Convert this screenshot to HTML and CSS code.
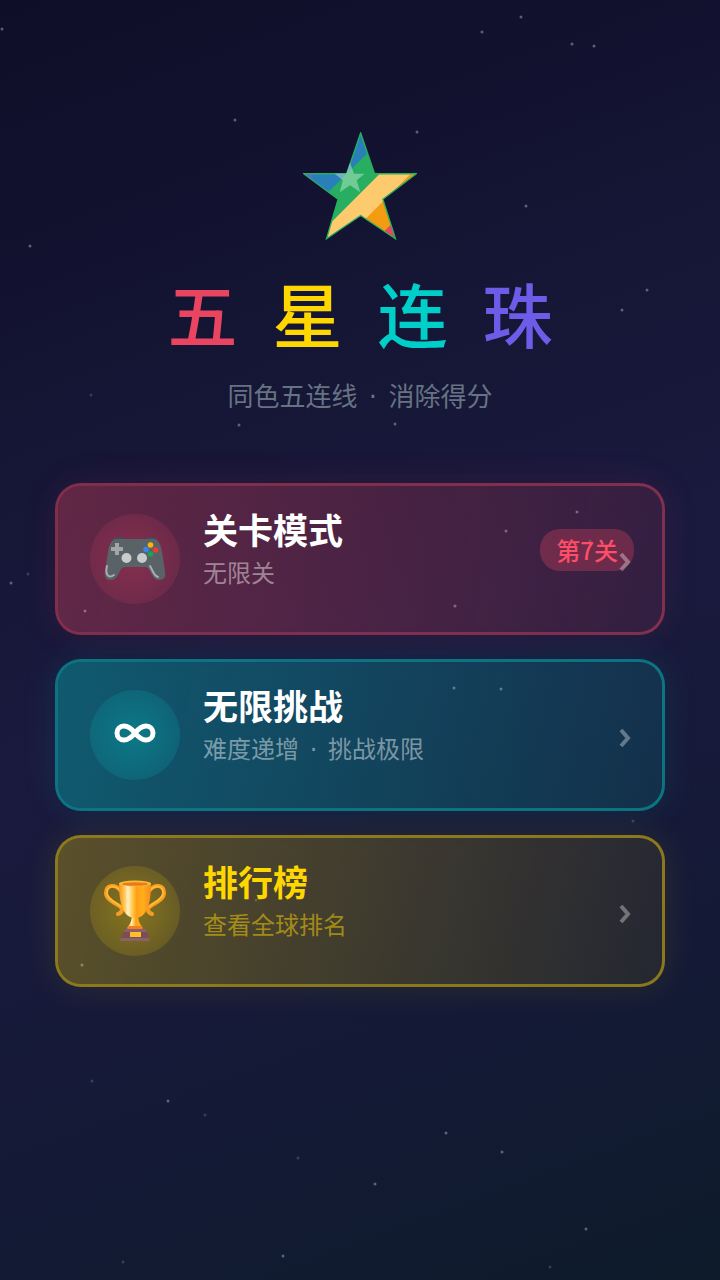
FILE: index.html
```html
<!DOCTYPE html>
<html lang="zh-CN">
<head>
<meta charset="utf-8">
<meta name="viewport" content="width=device-width, initial-scale=1">
<title>五星连珠</title>
<link rel="stylesheet" href="styles.css">
</head>
<body>
<main class="home">
  <header class="hero">
    <svg class="logo" viewBox="36 36 344 324" aria-hidden="true">
      <defs>
        <clipPath id="star"><path d="M210 38 252 161H378L277 238 315 357 210 287 107 357 142 238 38 161H168Z"/></clipPath>
      </defs>
      <g clip-path="url(#star)">
        <path fill="#27ae60" d="M0 0H420V400H0Z"/>
        <path fill="#2980b9" d="M0 0H329L0 329Z"/>
        <path fill="#6c5ce7" d="M0 0H232L0 232Z"/>
        <path fill="#fdcb6e" d="M429 0H600V400H29Z"/>
        <path fill="#f39c12" d="M522 0H700V400H122Z"/>
        <path fill="#e94560" d="M616 0H800V400H216Z"/>
      </g>
      <path fill="none" stroke="#27ae60" stroke-width="4" d="M210 38 252 161H378L277 238 315 357 210 287 107 357 142 238 38 161H168Z"/>
      <path fill="#fff" opacity=".35" d="M178 128 190 161H222L198 181 209 217 178 196 147 217 156 181 132 161H166Z"/>
    </svg>
    <h1 class="title"><span class="red">五</span><span class="gold">星</span><span class="teal">连</span><span class="violet">珠</span></h1>
    <p class="tagline">同色五连线 <span class="dot">·</span> 消除得分</p>
  </header>

  <nav class="menu" aria-label="主菜单">
    <button class="card card-red" type="button">
      <span class="icon">
        <svg class="pad" viewBox="0 0 62 44" aria-hidden="true">
          <path fill="#454e53" d="M9 4Q10 0 15 0T21 4H41Q42 0 47 0T53 4V9H9Z"/>
          <path fill="#596267" d="M12 2H50C55 2 57 9 58 15L61 34C62 40 60 43 55 43C51 43 49 40 47 36C45 32 44 30 40 30H22C18 30 17 32 15 36C13 40 11 43 7 43C2 43 0 40 1 34L4 15C5 9 7 2 12 2Z"/>
          <path stroke="#a2a6a8" stroke-width="4" fill="none" d="M7 12H19M13 6V18"/>
          <circle cx="22.500" cy="21" r="5" fill="#c9cccd"/><circle cx="38" cy="21" r="5" fill="#c9cccd"/>
          <circle cx="46.500" cy="8" r="2.800" fill="#fbb409"/><circle cx="42" cy="12.500" r="2.800" fill="#3b82f0"/>
          <circle cx="51.500" cy="13" r="2.800" fill="#ef3b34"/><circle cx="46.500" cy="17" r="2.800" fill="#14a651"/>
          <path fill="none" stroke="#a8adaf" stroke-width="2" stroke-linecap="round" d="M3 29C1 37 4 42 10 38M46 29C49 34 50 39 54 40"/>
        </svg>
      </span>
      <span class="copy"><strong class="name">关卡模式</strong><span class="note">无限关</span></span>
      <span class="badge">第7关</span>
      <svg class="chevron" viewBox="0 0 12 20" aria-hidden="true"><path d="M2 2 9 10 2 18"/></svg>
    </button>

    <button class="card card-teal" type="button">
      <span class="icon">
        <svg class="infinity" viewBox="0 0 42 20" aria-hidden="true"><path d="M21 10C17 5 14 3 10 3C6 3 3 6 3 10S6 17 10 17C14 17 17 15 21 10C25 5 28 3 32 3C36 3 39 6 39 10S36 17 32 17C28 17 25 15 21 10Z"/></svg>
      </span>
      <span class="copy"><strong class="name">无限挑战</strong><span class="note">难度递增 <span class="dot">·</span> 挑战极限</span></span>
      <svg class="chevron" viewBox="0 0 12 20" aria-hidden="true"><path d="M2 2 9 10 2 18"/></svg>
    </button>

    <button class="card card-gold" type="button">
      <span class="icon">
        <svg class="cup" viewBox="0 0 62 62" aria-hidden="true">
          <defs><linearGradient id="bowl"><stop offset="0" stop-color="#f7931e"/><stop offset=".16" stop-color="#ffc44a"/><stop offset=".28" stop-color="#fff0cb"/><stop offset=".42" stop-color="#ffca48"/><stop offset=".55" stop-color="#ff9f18"/><stop offset=".75" stop-color="#ffae1c"/><stop offset="1" stop-color="#f78c1f"/></linearGradient></defs>
          <path fill="none" stroke="#f99d20" stroke-width="4" stroke-linecap="round" stroke-linejoin="round" d="M17 11C11 3 2 5 2 13C2 22 17 24 18 29Q18 33 14 34M45 11C51 3 60 5 60 13C60 22 45 24 44 29Q44 33 48 34"/>
          <path fill="none" stroke="#ffc03a" stroke-width="1.500" d="M16 10C10 4 3 6 3 13C3 20 14 23 17 27M46 10C52 4 59 6 59 13C59 20 48 23 45 27"/>
          <path fill="#784f57" d="M21 49H42L46 61H16Z"/>
          <path fill="#8d6068" d="M21 49H42L43 52H20ZM17 58H45L46 61H16Z"/>
          <path fill="url(#bowl)" d="M28 34H34C34 41 36 44 39 48H23C26 44 28 41 28 34Z"/>
          <path fill="#f57f23" d="M25 46H37L39 49H23Z"/>
          <path fill="url(#bowl)" d="M15 3H47C47 21 44 38 31 38S15 21 15 3Z"/>
          <ellipse cx="31" cy="3.500" rx="16" ry="3" fill="#ffbd2d"/><ellipse cx="31" cy="4" rx="13" ry="1.700" fill="#e77824"/>
          <path fill="#ffbf2d" d="M26 52H37V57H26Z"/>
        </svg>
      </span>
      <span class="copy"><strong class="name">排行榜</strong><span class="note">查看全球排名</span></span>
      <svg class="chevron" viewBox="0 0 12 20" aria-hidden="true"><path d="M2 2 9 10 2 18"/></svg>
    </button>
  </nav>

  <svg class="sky" viewBox="0 0 720 1280" preserveAspectRatio="xMidYMin slice" aria-hidden="true">
    <path d="M2 29h0M482 32h0M521 17h0M572 44h0M594 46h0M235 120h0M417 132h0M526 206h0M30 246h0M647 290h0M622 310h0M239 425h0M395 424h0M577 512h0M506 531h0M11 583h0M85 611h0M455 606h0M454 688h0M501 689h0M82 965h0M168 1101h0M446 1133h0M502 1152h0M375 1184h0M586 1229h0M283 1256h0"/>
    <path class="faint" d="M91 395h0M28 574h0M590 541h0M633 821h0M256 900h0M241 926h0M92 1081h0M205 1115h0M298 1158h0M550 1267h0M123 1262h0"/>
  </svg>
</main>
</body>
</html>
```
FILE: styles.css
```css
* { box-sizing: border-box; }

body {
  margin: 0;
  font-family: "Noto Sans CJK SC", "Noto Sans", sans-serif;
  color: #fff;
}

.home {
  position: relative;
  min-height: 100vh;
  padding: 132px 55px 60px;
  overflow: hidden;
  background: linear-gradient(160deg, #0e0e28 0%, #1a1a3e 50%, #141a36 78%, #0d1b2a 100%);
}

.hero {
  display: flex;
  flex-direction: column;
  align-items: center;
}

.logo { width: 114px; height: 108px; }

.title {
  display: flex;
  gap: 35px;
  margin: 28px 0 0;
  font-size: 70px;
  line-height: 90px;
  font-weight: 500;
}

.red { color: #e94560; }
.gold { color: #ffd700; }
.teal { color: #00cec9; }
.violet { color: #6c5ce7; }

.tagline {
  margin: 21px 0 0;
  font-family: "DejaVu Sans", "Noto Sans CJK SC", sans-serif;
  font-size: 26px;
  line-height: 36px;
  color: #667383;
}

.dot { margin: 0 3px; }

.menu {
  display: flex;
  flex-direction: column;
  gap: 24px;
  margin-top: 68px;
}

.card {
  --tint: 233, 69, 96;
  position: relative;
  display: flex;
  align-items: center;
  gap: 23px;
  width: 100%;
  min-height: 152px;
  padding: 16px 31px 16px 32px;
  border: 3px solid rgba(var(--tint), .5);
  border-radius: 26px;
  background: linear-gradient(100deg, rgba(var(--tint), .36), rgba(var(--tint), .12)) border-box;
  background-clip: padding-box;
  box-shadow: 0 0 36px rgba(var(--tint), .1);
  font: inherit;
  color: #fff;
  text-align: left;
  cursor: pointer;
}

.card-teal { --tint: 0, 206, 201; }
.card-gold { --tint: 255, 215, 0; background-image: linear-gradient(100deg, rgba(var(--tint), .29), rgba(var(--tint), .07)); }

.icon {
  display: grid;
  place-items: center;
  flex: none;
  width: 90px;
  height: 90px;
  border-radius: 50%;
  background: radial-gradient(circle, rgba(var(--tint), .3), rgba(var(--tint), .14) 70%);
}

.pad { width: 62px; height: 44px; }
.cup { width: 62px; height: 62px; }
.infinity { width: 42px; height: 20px; margin-bottom: 4px; }
.infinity path { fill: none; stroke: #fff; stroke-width: 5; }

.copy {
  display: flex;
  flex: 1;
  flex-direction: column;
  gap: 4px;
  padding-bottom: 20px;
}

.name {
  font-size: 35px;
  line-height: 46px;
  font-weight: 700;
}

.note {
  font-family: "DejaVu Sans", "Noto Sans CJK SC", sans-serif;
  font-size: 24px;
  line-height: 36px;
  color: rgba(255, 255, 255, .45);
}

.card-gold .name { color: #ffd700; }
.card-gold .note { color: rgba(255, 215, 0, .5); }

.badge {
  position: absolute;
  top: 43px;
  right: 28px;
  padding: 3px 16px;
  border-radius: 20px;
  background: rgba(233, 69, 96, .3);
  font-size: 24px;
  line-height: 36px;
  font-weight: 500;
  color: #ff4d67;
}

.chevron {
  position: relative;
  width: 12px;
  height: 20px;
  margin-top: 6px;
}

.chevron path {
  fill: none;
  stroke: rgba(255, 255, 255, .34);
  stroke-width: 4;
}

.sky {
  position: absolute;
  inset: 0;
  width: 100%;
  height: 100%;
  pointer-events: none;
}

.sky path {
  stroke: rgba(255, 255, 255, .32);
  stroke-width: 3;
  stroke-linecap: round;
}

.sky .faint { stroke: rgba(255, 255, 255, .16); }
```
